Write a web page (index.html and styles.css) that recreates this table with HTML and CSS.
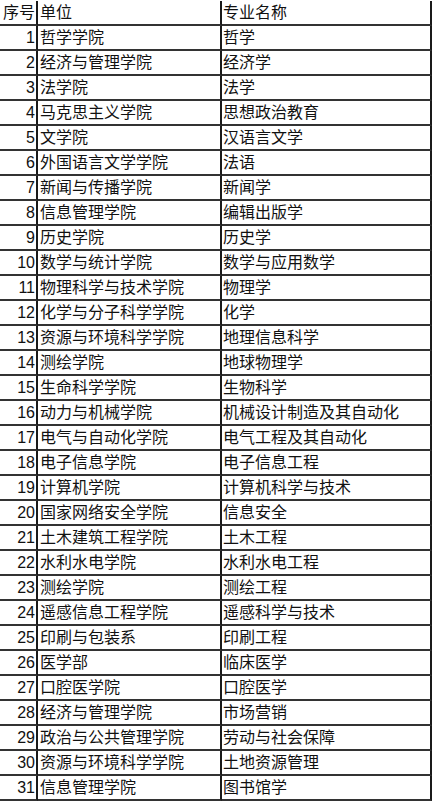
FILE: index.html
```html
<!DOCTYPE html>
<html lang="zh-CN">
<head>
<meta charset="utf-8">
<title>专业列表</title>
<link rel="stylesheet" href="styles.css">
</head>
<body>
<div class="table">
  <div class="row"><div class="c num">序号</div><div class="c unit">单位</div><div class="c major">专业名称</div></div>
  <div class="row"><div class="c num">1</div><div class="c unit">哲学学院</div><div class="c major">哲学</div></div>
  <div class="row"><div class="c num">2</div><div class="c unit">经济与管理学院</div><div class="c major">经济学</div></div>
  <div class="row"><div class="c num">3</div><div class="c unit">法学院</div><div class="c major">法学</div></div>
  <div class="row"><div class="c num">4</div><div class="c unit">马克思主义学院</div><div class="c major">思想政治教育</div></div>
  <div class="row"><div class="c num">5</div><div class="c unit">文学院</div><div class="c major">汉语言文学</div></div>
  <div class="row"><div class="c num">6</div><div class="c unit">外国语言文学学院</div><div class="c major">法语</div></div>
  <div class="row"><div class="c num">7</div><div class="c unit">新闻与传播学院</div><div class="c major">新闻学</div></div>
  <div class="row"><div class="c num">8</div><div class="c unit">信息管理学院</div><div class="c major">编辑出版学</div></div>
  <div class="row"><div class="c num">9</div><div class="c unit">历史学院</div><div class="c major">历史学</div></div>
  <div class="row"><div class="c num">10</div><div class="c unit">数学与统计学院</div><div class="c major">数学与应用数学</div></div>
  <div class="row"><div class="c num">11</div><div class="c unit">物理科学与技术学院</div><div class="c major">物理学</div></div>
  <div class="row"><div class="c num">12</div><div class="c unit">化学与分子科学学院</div><div class="c major">化学</div></div>
  <div class="row"><div class="c num">13</div><div class="c unit">资源与环境科学学院</div><div class="c major">地理信息科学</div></div>
  <div class="row"><div class="c num">14</div><div class="c unit">测绘学院</div><div class="c major">地球物理学</div></div>
  <div class="row"><div class="c num">15</div><div class="c unit">生命科学学院</div><div class="c major">生物科学</div></div>
  <div class="row"><div class="c num">16</div><div class="c unit">动力与机械学院</div><div class="c major">机械设计制造及其自动化</div></div>
  <div class="row"><div class="c num">17</div><div class="c unit">电气与自动化学院</div><div class="c major">电气工程及其自动化</div></div>
  <div class="row"><div class="c num">18</div><div class="c unit">电子信息学院</div><div class="c major">电子信息工程</div></div>
  <div class="row"><div class="c num">19</div><div class="c unit">计算机学院</div><div class="c major">计算机科学与技术</div></div>
  <div class="row"><div class="c num">20</div><div class="c unit">国家网络安全学院</div><div class="c major">信息安全</div></div>
  <div class="row"><div class="c num">21</div><div class="c unit">土木建筑工程学院</div><div class="c major">土木工程</div></div>
  <div class="row"><div class="c num">22</div><div class="c unit">水利水电学院</div><div class="c major">水利水电工程</div></div>
  <div class="row"><div class="c num">23</div><div class="c unit">测绘学院</div><div class="c major">测绘工程</div></div>
  <div class="row"><div class="c num">24</div><div class="c unit">遥感信息工程学院</div><div class="c major">遥感科学与技术</div></div>
  <div class="row"><div class="c num">25</div><div class="c unit">印刷与包装系</div><div class="c major">印刷工程</div></div>
  <div class="row"><div class="c num">26</div><div class="c unit">医学部</div><div class="c major">临床医学</div></div>
  <div class="row"><div class="c num">27</div><div class="c unit">口腔医学院</div><div class="c major">口腔医学</div></div>
  <div class="row"><div class="c num">28</div><div class="c unit">经济与管理学院</div><div class="c major">市场营销</div></div>
  <div class="row"><div class="c num">29</div><div class="c unit">政治与公共管理学院</div><div class="c major">劳动与社会保障</div></div>
  <div class="row"><div class="c num">30</div><div class="c unit">资源与环境科学学院</div><div class="c major">土地资源管理</div></div>
  <div class="row"><div class="c num">31</div><div class="c unit">信息管理学院</div><div class="c major">图书馆学</div></div>
</div>
</body>
</html>
```

FILE: styles.css
```css
html, body {
  margin: 0;
  padding: 0;
  background: #ffffff;
}
body {
  padding-top: 1px;
  font-family: "Liberation Sans", "Noto Sans CJK SC", sans-serif;
  font-size: 16px;
  color: #111;
}
.table {
  width: 432px;
  display: flex;
  flex-direction: column;
}
.row {
  display: grid;
  grid-template-columns: 38px 184px 210px;
  height: 25px;
}
.c {
  height: 23px;
  line-height: 23px;
  border-bottom: 2px solid #333;
  border-right: 2px solid #1a1a1a;
  white-space: nowrap;
  overflow: hidden;
}
.num {
  text-align: right;
  padding-right: 1px;
}
.unit {
  padding-left: 2px;
}
.major {
  padding-left: 1px;
}
```
